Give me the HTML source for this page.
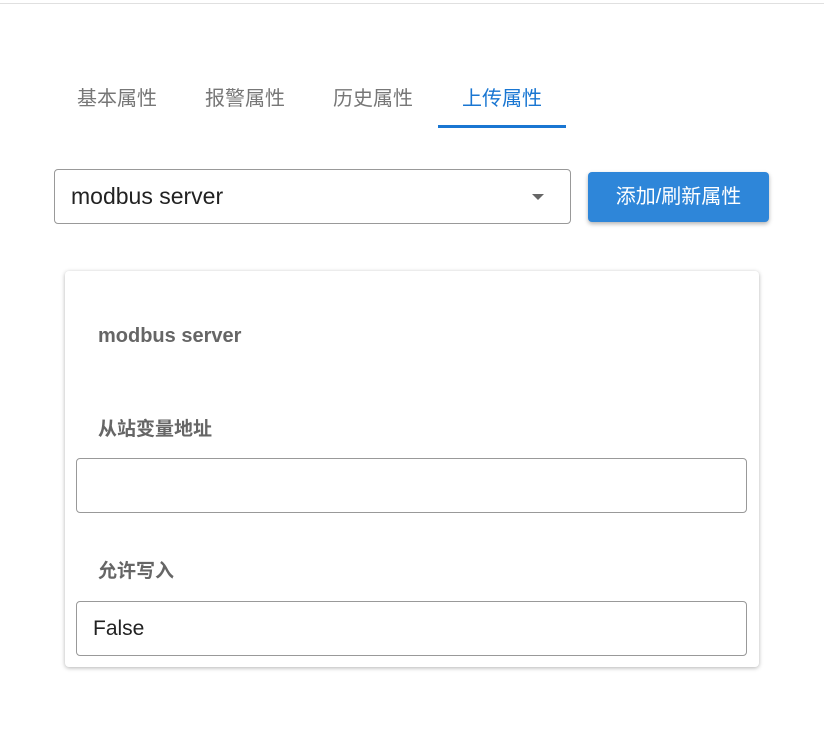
<!DOCTYPE html>
<html><head><meta charset="utf-8"><style>
*{box-sizing:border-box;margin:0;padding:0}
body{width:824px;height:739px;background:#fff;font-family:"Liberation Sans","Noto Sans CJK SC",sans-serif;position:relative;overflow:hidden}
.topline{position:absolute;left:0;top:3px;width:824px;height:1px;background:#e0e0e0}
.tab{position:absolute;top:82px;font-size:20px;color:#777;width:128px;text-align:center}
.ind{position:absolute;left:438px;top:125px;width:128px;height:3px;background:#1976d2}
.sel{position:absolute;left:54px;top:169px;width:517px;height:55px;border:1px solid #999;border-radius:4px}
.sel span{position:absolute;left:16px;top:13px;font-size:23px;color:#222}
.arr{position:absolute;left:477px;top:24px;width:0;height:0;border-left:6px solid transparent;border-right:6px solid transparent;border-top:6px solid #666}
.btn{position:absolute;left:588px;top:172px;width:181px;height:50px;background:#2e86d9;border-radius:4px;color:#fff;font-size:20px;text-align:center;line-height:50px;box-shadow:0 2px 4px rgba(0,0,0,.3)}
.card{position:absolute;left:65px;top:271px;width:694px;height:396px;border-radius:4px;box-shadow:0 1px 4px rgba(0,0,0,.3);background:#fff}
.lbl{position:absolute;left:33px;font-size:19px;font-weight:bold;color:#666}
.inp{position:absolute;left:11px;width:671px;height:55px;border:1px solid #999;border-radius:4px}
.inp span{position:absolute;left:16px;top:15px;font-size:21px;color:#222}
</style></head><body>
<div class="topline"></div>
<div class="tab" style="left:53px">基本属性</div>
<div class="tab" style="left:181px">报警属性</div>
<div class="tab" style="left:309px">历史属性</div>
<div class="tab" style="left:438px;color:#1976d2">上传属性</div>
<div class="ind"></div>
<div class="sel"><span>modbus server</span><div class="arr"></div></div>
<div class="btn">添加/刷新属性</div>
<div class="card">
<div class="lbl" style="top:54px;font-size:20px">modbus server</div>
<div class="lbl" style="top:143px">从站变量地址</div>
<div class="inp" style="top:187px"></div>
<div class="lbl" style="top:285px">允许写入</div>
<div class="inp" style="top:330px"><span>False</span></div>
</div>
</body></html>
